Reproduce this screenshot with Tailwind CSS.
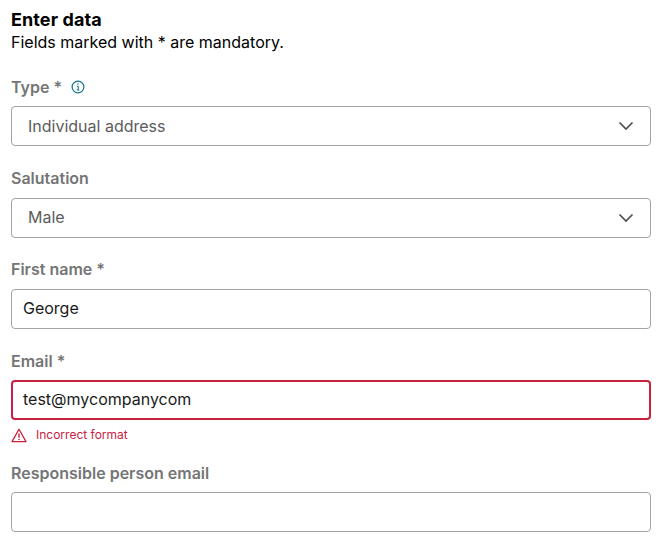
<!DOCTYPE html>
<html lang="en">
<head>
  <meta charset="UTF-8">
  <title>Enter data</title>
  <script src="https://cdn.jsdelivr.net/npm/@tailwindcss/browser@4"></script>
</head>
<body class="bg-white font-['Inter',sans-serif] text-black">
  <div class="w-[667px] h-[549px] overflow-hidden px-[11px] pt-[10px]">
    <h2 class="text-[18px] leading-[20px] font-bold tracking-[0.1px]">Enter data</h2>
    <p class="mt-[1px] text-[16px] leading-[22px]">Fields marked with * are mandatory.</p>

    <!-- Type -->
    <div class="mt-[23px] flex items-center h-[22px] gap-[9px] text-[16px] font-semibold text-[#757575]">
      <span class="pb-[1px]">Type *</span>
      <svg width="14" height="14" viewBox="0 0 15 15" fill="none" stroke="#0f7590" stroke-width="1.3">
        <circle cx="7.5" cy="7.5" r="6.3"/>
        <path d="M6.3 6.7h1.4v4M6.2 10.7h2.8" stroke-width="1.1"/>
        <circle cx="7.4" cy="4.4" r="0.8" fill="#0f7590" stroke="none"/>
      </svg>
    </div>
    <div class="mt-[8px] flex items-center justify-between w-[640px] h-[40px] pl-[16px] pr-[16px] border border-[#a3a3a3] rounded-[4px] text-[16px] text-[#5c5c5c]">
      <span>Individual address</span>
      <svg width="16" height="10" viewBox="0 0 16 10" fill="none" stroke="#4f4f4f" stroke-width="1.7"><path d="M1.5 1.5 8 8l6.5-6.5"/></svg>
    </div>

    <!-- Salutation -->
    <div class="mt-[22px] h-[22px] flex items-center pb-[2px] text-[16px] font-semibold text-[#757575]">Salutation</div>
    <div class="mt-[8px] flex items-center justify-between w-[640px] h-[40px] pl-[16px] pr-[16px] border border-[#a3a3a3] rounded-[4px] text-[16px] text-[#5c5c5c]">
      <span class="pb-[2px]">Male</span>
      <svg width="16" height="10" viewBox="0 0 16 10" fill="none" stroke="#4f4f4f" stroke-width="1.7"><path d="M1.5 1.5 8 8l6.5-6.5"/></svg>
    </div>

    <!-- First name -->
    <div class="mt-[21px] h-[22px] flex items-center pb-[2px] text-[16px] font-semibold text-[#757575]">First name *</div>
    <div class="mt-[8px] flex items-center w-[640px] h-[40px] pl-[11px] pb-[2px] border border-[#a3a3a3] rounded-[4px] text-[16px] text-[#1a1a1a]">George</div>

    <!-- Email -->
    <div class="mt-[21px] h-[22px] flex items-center pb-[1px] text-[16px] font-semibold text-[#757575]">Email *</div>
    <div class="mt-[8px] flex items-center w-[640px] h-[40px] pl-[10px] pb-[2px] border-2 border-[#c8213f] rounded-[4px] text-[16px] text-[#1a1a1a]">test@mycompanycom</div>
    <div class="mt-[6px] flex items-center h-[18px] gap-[9px] text-[12px] text-[#c8213f]">
      <svg width="16" height="15" viewBox="0 0 16 15" fill="none" stroke="#c8213f" stroke-width="1.3" stroke-linejoin="round">
        <path d="M8 1.2 15 13.6H1z"/>
        <path d="M8 5.5v4.2" stroke-width="1.4"/>
        <circle cx="8" cy="11.5" r="0.8" fill="#c8213f" stroke="none"/>
      </svg>
      <span class="pb-[1px]">Incorrect format</span>
    </div>

    <!-- Responsible person email -->
    <div class="mt-[19px] h-[22px] flex items-center pb-[2px] text-[16px] font-semibold text-[#757575]">Responsible person email</div>
    <div class="mt-[7px] w-[640px] h-[40px] border border-[#a3a3a3] rounded-[4px]"></div>
  </div>
</body>
</html>
